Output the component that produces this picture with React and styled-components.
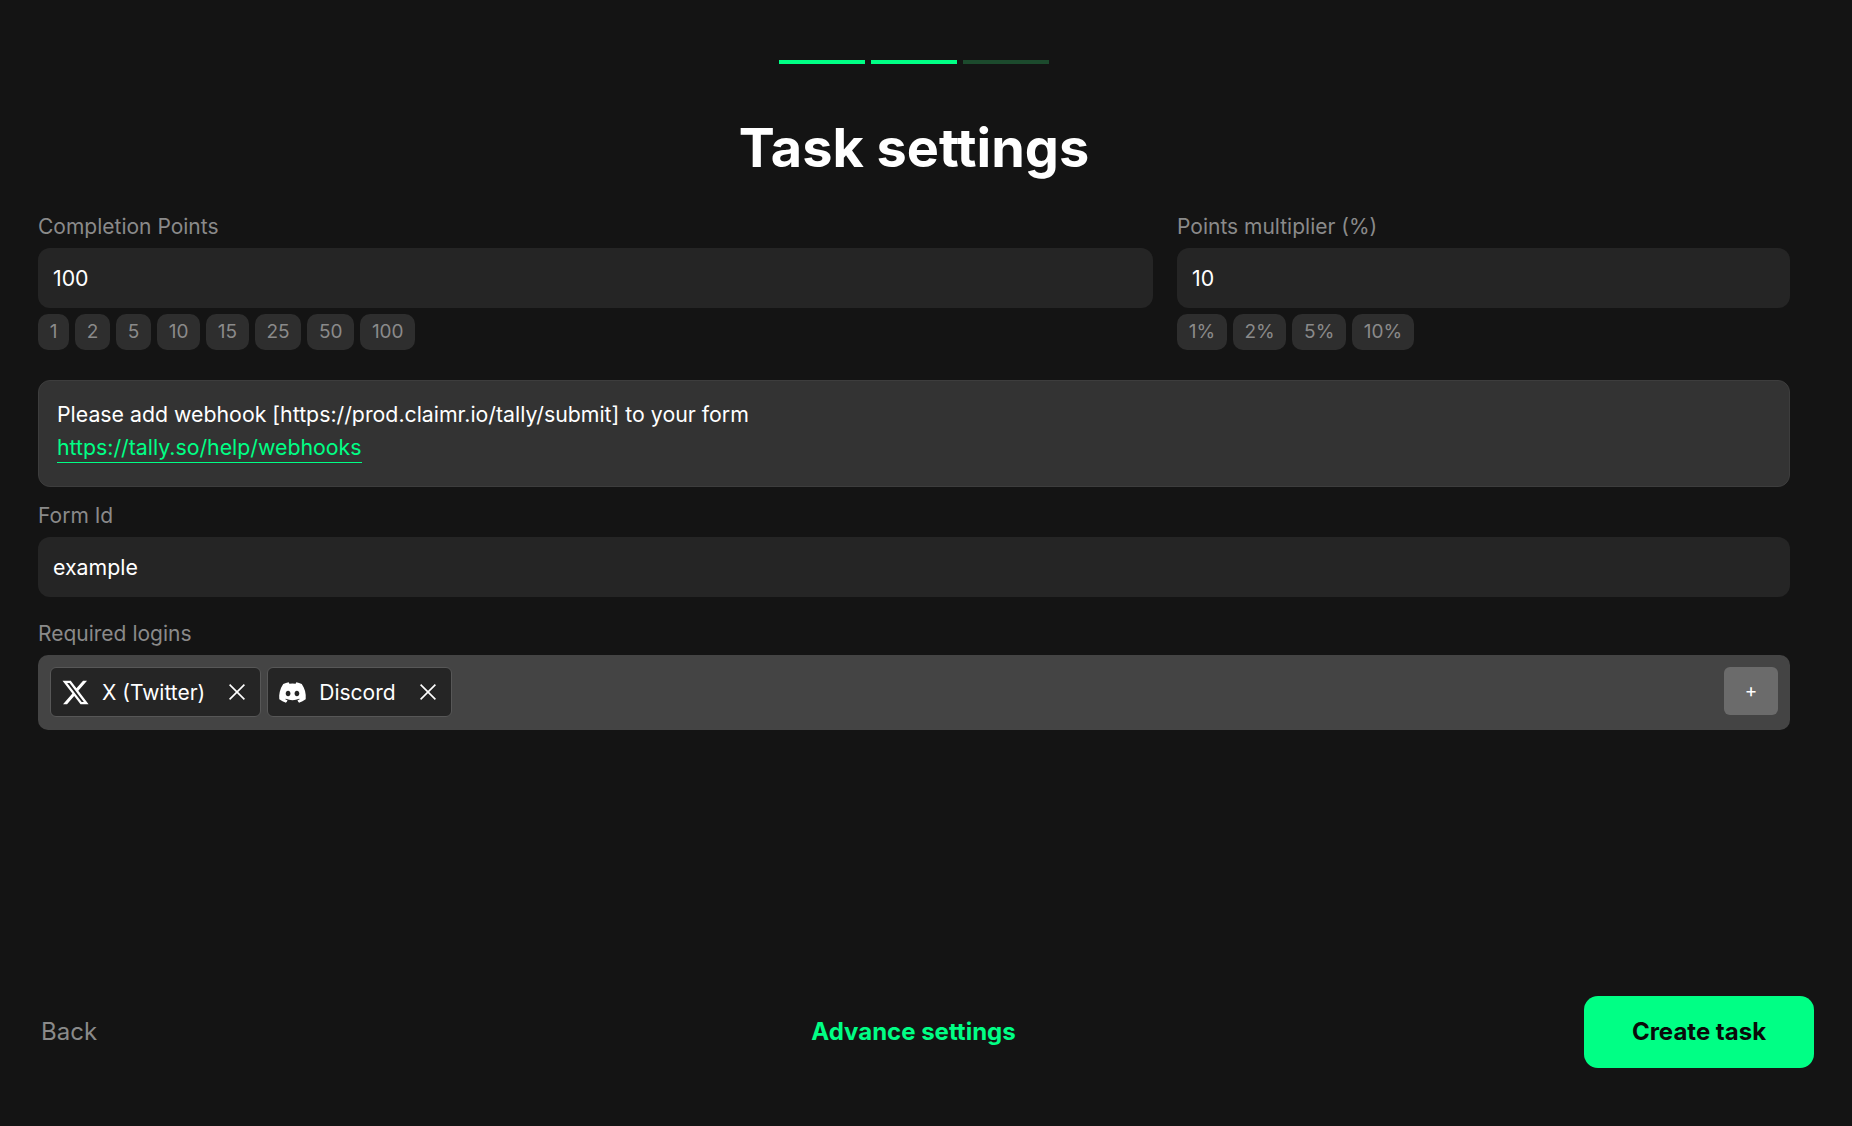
import React from "react";
import styled, { createGlobalStyle } from "styled-components";
import { FaXTwitter, FaDiscord } from "react-icons/fa6";

const GlobalStyle = createGlobalStyle`
  * {
    box-sizing: border-box;
  }
  body {
    margin: 0;
    background: #141414;
    color: #fff;
    font-family: Inter, "Liberation Sans", sans-serif;
  }
`;

const Page = styled.div`
  min-height: 100vh;
  display: flex;
  flex-direction: column;
  padding: 60px 38px 58px 38px;
`;

const Main = styled.main`
  flex: 1;
  width: 1752px;
`;

const Progress = styled.div`
  display: flex;
  justify-content: center;
  gap: 6px;
`;

const Step = styled.div`
  width: 86px;
  height: 4px;
  background: ${(p) => (p.$done ? "#00ff85" : "#1c4a2d")};
`;

const Title = styled.h1`
  margin: 50px 0 32px;
  font-size: 54px;
  line-height: 68px;
  font-weight: 700;
  text-align: center;
`;

const Columns = styled.div`
  display: grid;
  grid-template-columns: 1115px 613px;
  gap: 24px;
`;

const Label = styled.label`
  display: block;
  padding-top: 1px;
  margin-bottom: 9px;
  font-size: 21px;
  line-height: 24px;
  color: #8a8a8a;
`;

const Input = styled.input`
  display: block;
  width: 100%;
  height: 60px;
  padding: 0 15px;
  border: 0;
  border-radius: 12px;
  outline: 0;
  background: #252525;
  color: #fff;
  font-family: inherit;
  font-size: 21.3px;
`;

const Chips = styled.div`
  display: flex;
  gap: 6px;
  margin-top: 6px;
`;

const Chip = styled.button`
  height: 36px;
  padding: 0 11.7px 2px;
  border: 0;
  border-radius: 10px;
  background: #2e2e2e;
  color: #8a8a8a;
  font-family: inherit;
  font-size: 19px;
`;

const Note = styled.div`
  margin-top: 30px;
  padding: 17px 18px 22px;
  border: 1px solid #3d3d3d;
  border-radius: 12px;
  background: #333;
  font-size: 21.3px;
  line-height: 33px;
`;

const NoteLink = styled.a`
  color: #00ff85;
  text-decoration: none;
  border-bottom: 1px solid #00ff85;
  padding-bottom: 2px;
`;

const Field = styled.div`
  margin-top: ${(p) => p.$top}px;
`;

const LoginBox = styled.div`
  height: 75px;
  display: flex;
  align-items: flex-start;
  gap: 6px;
  padding: 12px;
  border-radius: 10px;
  background: #444;
`;

const Tag = styled.div`
  height: 50px;
  display: flex;
  align-items: center;
  padding: 0 15px 0 10px;
  border: 1px solid #575757;
  border-radius: 6px;
  background: #252525;
  font-size: 21px;
  svg.logo {
    width: 29px;
    height: 29px;
    margin-right: 12px;
  }
`;

const TagClose = styled.svg`
  width: 16px;
  height: 16px;
  margin-left: 24px;
  flex: none;
`;

const AddButton = styled.button`
  width: 54px;
  height: 48px;
  margin-left: auto;
  padding: 0 0 2px;
  border: 0;
  border-radius: 6px;
  background: #6b6b6b;
  color: #fff;
  font-family: inherit;
  font-size: 19px;
  line-height: 1;
`;

const Footer = styled.footer`
  display: flex;
  align-items: center;
  justify-content: space-between;
`;

const BackButton = styled.button`
  width: 205px;
  padding: 0 0 2px 3px;
  border: 0;
  background: none;
  text-align: left;
  color: #8a8a8a;
  font-family: inherit;
  font-size: 24px;
`;

const AdvanceButton = styled.button`
  padding: 0 0 2px;
  border: 0;
  background: none;
  color: #00ff85;
  font-family: inherit;
  font-size: 24px;
  font-weight: 700;
`;

const CreateButton = styled.button`
  width: 230px;
  height: 72px;
  padding: 0 0 2px;
  border: 0;
  border-radius: 14px;
  background: #00ff85;
  color: #0a0a0a;
  font-family: inherit;
  font-size: 24px;
  font-weight: 700;
`;

const CloseIcon = () => (
  <TagClose viewBox="0 0 16 16" fill="none" stroke="currentColor" strokeWidth="1.6">
    <path d="M.6.6l14.8 14.8M15.4.6L.6 15.4" />
  </TagClose>
);

const pointOptions = ["1", "2", "5", "10", "15", "25", "50", "100"];
const multiplierOptions = ["1%", "2%", "5%", "10%"];

export default function App() {
  return (
    <Page>
      <GlobalStyle />
      <Main>
        <Progress>
          <Step $done />
          <Step $done />
          <Step />
        </Progress>
        <Title>Task settings</Title>
        <Columns>
          <div>
            <Label>Completion Points</Label>
            <Input defaultValue="100" />
            <Chips>
              {pointOptions.map((o) => (
                <Chip key={o}>{o}</Chip>
              ))}
            </Chips>
          </div>
          <div>
            <Label>Points multiplier (%)</Label>
            <Input defaultValue="10" />
            <Chips>
              {multiplierOptions.map((o) => (
                <Chip key={o}>{o}</Chip>
              ))}
            </Chips>
          </div>
        </Columns>
        <Note>
          Please add webhook [https://prod.claimr.io/tally/submit] to your form
          <br />
          <NoteLink href="#">https://tally.so/help/webhooks</NoteLink>
        </Note>
        <Field $top={16}>
          <Label>Form Id</Label>
          <Input defaultValue="example" />
        </Field>
        <Field $top={24}>
          <Label>Required logins</Label>
          <LoginBox>
            <Tag>
              <FaXTwitter className="logo" />
              X (Twitter)
              <CloseIcon />
            </Tag>
            <Tag>
              <FaDiscord className="logo" />
              Discord
              <CloseIcon />
            </Tag>
            <AddButton>+</AddButton>
          </LoginBox>
        </Field>
      </Main>
      <Footer>
        <BackButton>Back</BackButton>
        <AdvanceButton>Advance settings</AdvanceButton>
        <CreateButton>Create task</CreateButton>
      </Footer>
    </Page>
  );
}
